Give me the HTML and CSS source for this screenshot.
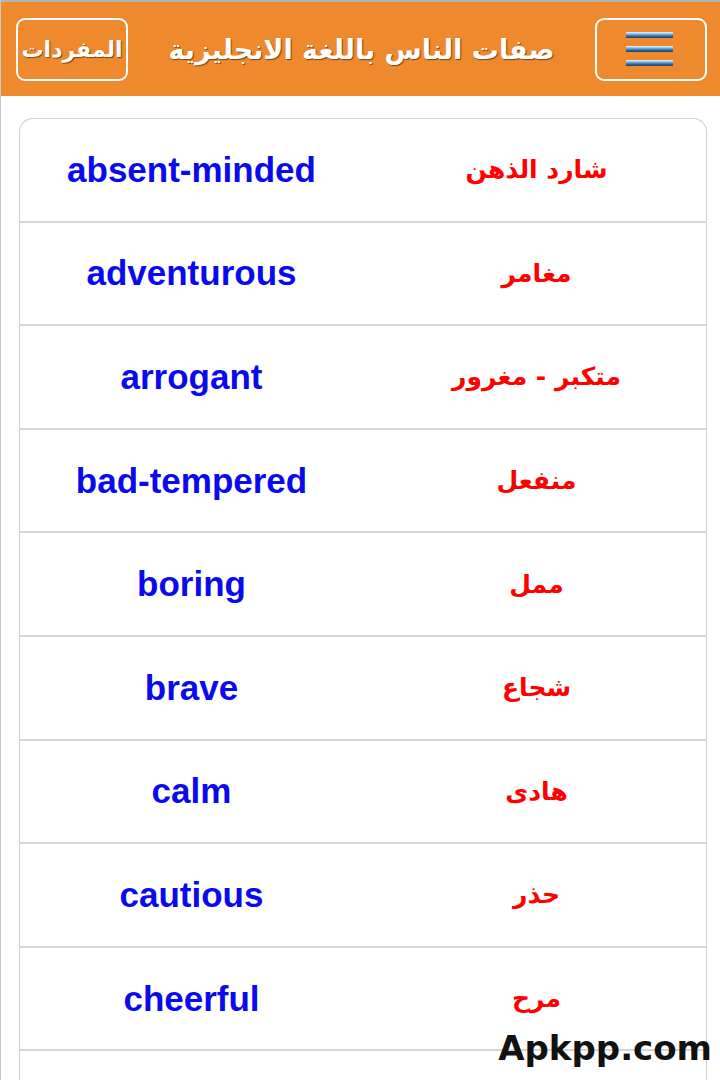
FILE: index.html
```html
<!DOCTYPE html>
<html lang="ar">
<head>
<meta charset="utf-8">
<link rel="stylesheet" href="styles.css">
</head>
<body>
<div class="page">
  <header class="topbar">
    <button class="menu-btn" aria-label="menu">
      <span class="bar"></span><span class="bar"></span><span class="bar"></span>
    </button>
    <h1 class="title">صفات الناس باللغة الانجليزية</h1>
    <button class="words-btn">المفردات</button>
  </header>
  <main class="content">
    <div class="table">
      <div class="row"><div class="ar">شارد الذهن</div><div class="en">absent-minded</div></div>
      <div class="row"><div class="ar">مغامر</div><div class="en">adventurous</div></div>
      <div class="row"><div class="ar">متكبر - مغرور</div><div class="en">arrogant</div></div>
      <div class="row"><div class="ar">منفعل</div><div class="en">bad-tempered</div></div>
      <div class="row"><div class="ar">ممل</div><div class="en">boring</div></div>
      <div class="row"><div class="ar">شجاع</div><div class="en">brave</div></div>
      <div class="row"><div class="ar">هادى</div><div class="en">calm</div></div>
      <div class="row"><div class="ar">حذر</div><div class="en">cautious</div></div>
      <div class="row"><div class="ar">مرح</div><div class="en">cheerful</div></div>
      <div class="row"><div class="ar"></div><div class="en"></div></div>
    </div>
  </main>
  <div class="watermark">Apkpp.com</div>
</div>
</body>
</html>
```
FILE: styles.css
```css
html, body {
  margin: 0;
  padding: 0;
  background: #ffffff;
}
.page {
  position: relative;
  width: 720px;
  height: 1080px;
  overflow: hidden;
  border-left: 1px solid #c8c8c8;
  box-sizing: border-box;
  font-family: "Liberation Sans", "DejaVu Sans", sans-serif;
}
.topbar {
  direction: rtl;
  display: flex;
  align-items: center;
  justify-content: space-between;
  height: 94px;
  border-top: 2px solid #b4b4b4;
  background: #ee8a2d;
  padding: 0 13px 0 15px;
}
.menu-btn {
  width: 112px;
  height: 63px;
  border: 2px solid #ffffff;
  border-radius: 9px;
  background: transparent;
  display: flex;
  flex-direction: column;
  align-items: center;
  justify-content: center;
  gap: 8px;
  padding: 0 4px 0 0;
}
.bar {
  display: block;
  width: 47px;
  height: 6px;
  background: linear-gradient(#f4f8fb 0%, #8ec0e6 30%, #2f73b5 65%, #1e3c5e 100%);
}
.title {
  margin: 0;
  color: #ffffff;
  font-family: "DejaVu Sans", sans-serif;
  font-weight: bold;
  font-size: 27px;
  text-shadow: 1px 1px 1px #7a4410;
  flex: 1;
  text-align: center;
}
.words-btn {
  width: 112px;
  height: 63px;
  border: 2px solid #ffffff;
  border-radius: 9px;
  background: transparent;
  color: #ffffff;
  font-family: "DejaVu Sans", sans-serif;
  font-weight: bold;
  font-size: 22px;
  text-shadow: 1px 1px 1px #7a4410;
  padding: 0;
}
.content {
  padding: 22px 13px 0 18px;
}
.table {
  border: 1px solid #cfcfcf;
  border-bottom: none;
  border-radius: 14px 14px 0 0;
}
.row {
  direction: rtl;
  display: grid;
  grid-template-columns: 1fr 1fr;
  box-sizing: border-box;
  height: 103.6px;
  border-bottom: 2px solid #d6d6d6;
  align-items: center;
}
.ar {
  text-align: center;
  color: #ff0000;
  font-family: "DejaVu Sans", sans-serif;
  font-weight: bold;
  font-size: 25px;
  padding-left: 4px;
}
.en {
  text-align: center;
  color: #0a0aee;
  font-family: "Liberation Sans", sans-serif;
  font-weight: bold;
  font-size: 35px;
}
.watermark {
  position: absolute;
  right: 6px;
  bottom: 12px;
  font-family: "DejaVu Sans", sans-serif;
  font-weight: bold;
  font-size: 34px;
  color: #111111;
  padding: 0 2px;
}
```
